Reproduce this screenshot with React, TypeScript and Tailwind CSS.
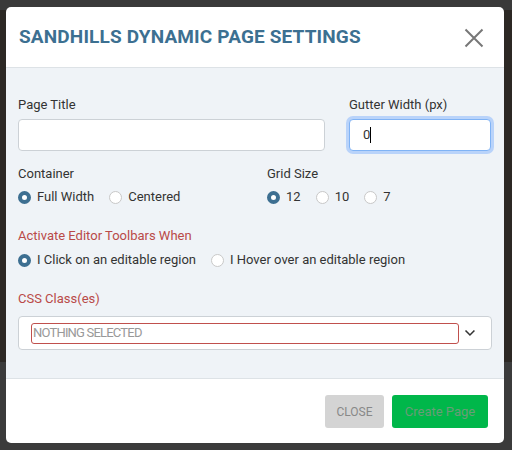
import React from "react";

function Radio({ checked, label }: { checked?: boolean; label: string }) {
  return (
    <label className="flex items-center gap-[6px] mr-[15px]">
      {checked ? (
        <span className="w-[13px] h-[13px] rounded-full border-[4px] border-[#3d6f91] bg-white box-border" />
      ) : (
        <span className="w-[13px] h-[13px] rounded-full border border-[#c8c8c8] bg-white box-border" />
      )}
      <span className="text-[13px] text-[#333]">{label}</span>
    </label>
  );
}

export default function App() {
  return (
    <div
      className="w-[512px] h-[450px] pt-[7px] pl-[6px] bg-[linear-gradient(to_bottom,#3a3a3a_0,#3a3a3a_10px,#2c2824_10px,#2c2824_362px,#3b3b3b_362px)]"
      style={{ fontFamily: "Roboto, 'Liberation Sans', sans-serif" }}
    >
      <div className="w-[498px] h-[436px] bg-white rounded-[5px] flex flex-col overflow-hidden">
        <div className="h-[61px] flex items-center justify-between pl-[13px] pr-[20px] border-b border-[#dde2e6] shrink-0">
          <h1 className="text-[19px] font-bold tracking-[0.15px] text-[#3c7091] pt-[1px]">
            SANDHILLS DYNAMIC PAGE SETTINGS
          </h1>
          <svg width="20" height="20" viewBox="0 0 20 20" className="mt-[1px]">
            <path d="M1.5 1.5 L18.5 18.5 M18.5 1.5 L1.5 18.5" stroke="#777" strokeWidth="2" fill="none" />
          </svg>
        </div>
        <div className="bg-[#eff3f7] px-[12px] pt-[27px] pb-[28px] border-b border-[#dde2e6] flex-1">
          <div className="grid grid-cols-[307px_142px] gap-x-[24px]">
            <div>
              <div className="text-[13px] leading-[20px] text-[#333]">Page Title</div>
              <div className="mt-[4px] h-[32px] bg-white border border-[#ccd1d6] rounded-[4px]" />
            </div>
            <div>
              <div className="text-[13px] leading-[20px] text-[#333]">Gutter Width (px)</div>
              <div className="mt-[4px] h-[32px] bg-white border border-[#80b3f5] rounded-[4px] shadow-[0_0_0_3px_#b9d3fa] flex items-center pl-[13px] text-[13px] text-[#333]">
                0<span className="w-px h-[16px] bg-black" />
              </div>
            </div>
          </div>
          <div className="grid grid-cols-[223px_224px] gap-x-[26px] mt-[13px]">
            <div>
              <div className="text-[13px] leading-[20px] text-[#333]">Container</div>
              <div className="flex mt-[3px] h-[20px] items-center">
                <Radio checked label="Full Width" />
                <Radio label="Centered" />
              </div>
            </div>
            <div>
              <div className="text-[13px] leading-[20px] text-[#333]">Grid Size</div>
              <div className="flex mt-[3px] h-[20px] items-center">
                <Radio checked label="12" />
                <Radio label="10" />
                <Radio label="7" />
              </div>
            </div>
          </div>
          <div className="mt-[19px] text-[13px] leading-[20px] text-[#b94a48]">
            Activate Editor Toolbars When
          </div>
          <div className="flex mt-[4px] h-[20px] items-center">
            <Radio checked label="I Click on an editable region" />
            <Radio label="I Hover over an editable region" />
          </div>
          <div className="mt-[19px] text-[13px] leading-[20px] text-[#b94a48]">CSS Class(es)</div>
          <div className="mt-[7px] h-[34px] bg-white border border-[#ccd1d6] rounded-[4px] flex items-center pl-[12px] pr-[15px]">
            <div className="w-[431px] h-[21px] border border-[#c0504d] rounded-[3px] flex items-center pl-[1px] text-[13px] text-[#999] tracking-[-0.8px]">
              NOTHING SELECTED
            </div>
            <svg width="12" height="8" viewBox="0 0 12 8" className="ml-[5px]">
              <path d="M1.5 1.5 L6 6 L10.5 1.5" stroke="#333" strokeWidth="1.6" fill="none" />
            </svg>
          </div>
        </div>
        <div className="h-[65px] flex items-center justify-end gap-[8px] pr-[16px] shrink-0">
          <button className="w-[59px] h-[33px] bg-[#d4d4d4] rounded-[3px] text-[12px] text-[#888]">
            CLOSE
          </button>
          <button className="w-[96px] h-[33px] bg-[#00b74a] rounded-[3px] text-[13px] text-[#6a9c78]">
            Create Page
          </button>
        </div>
      </div>
    </div>
  );
}
